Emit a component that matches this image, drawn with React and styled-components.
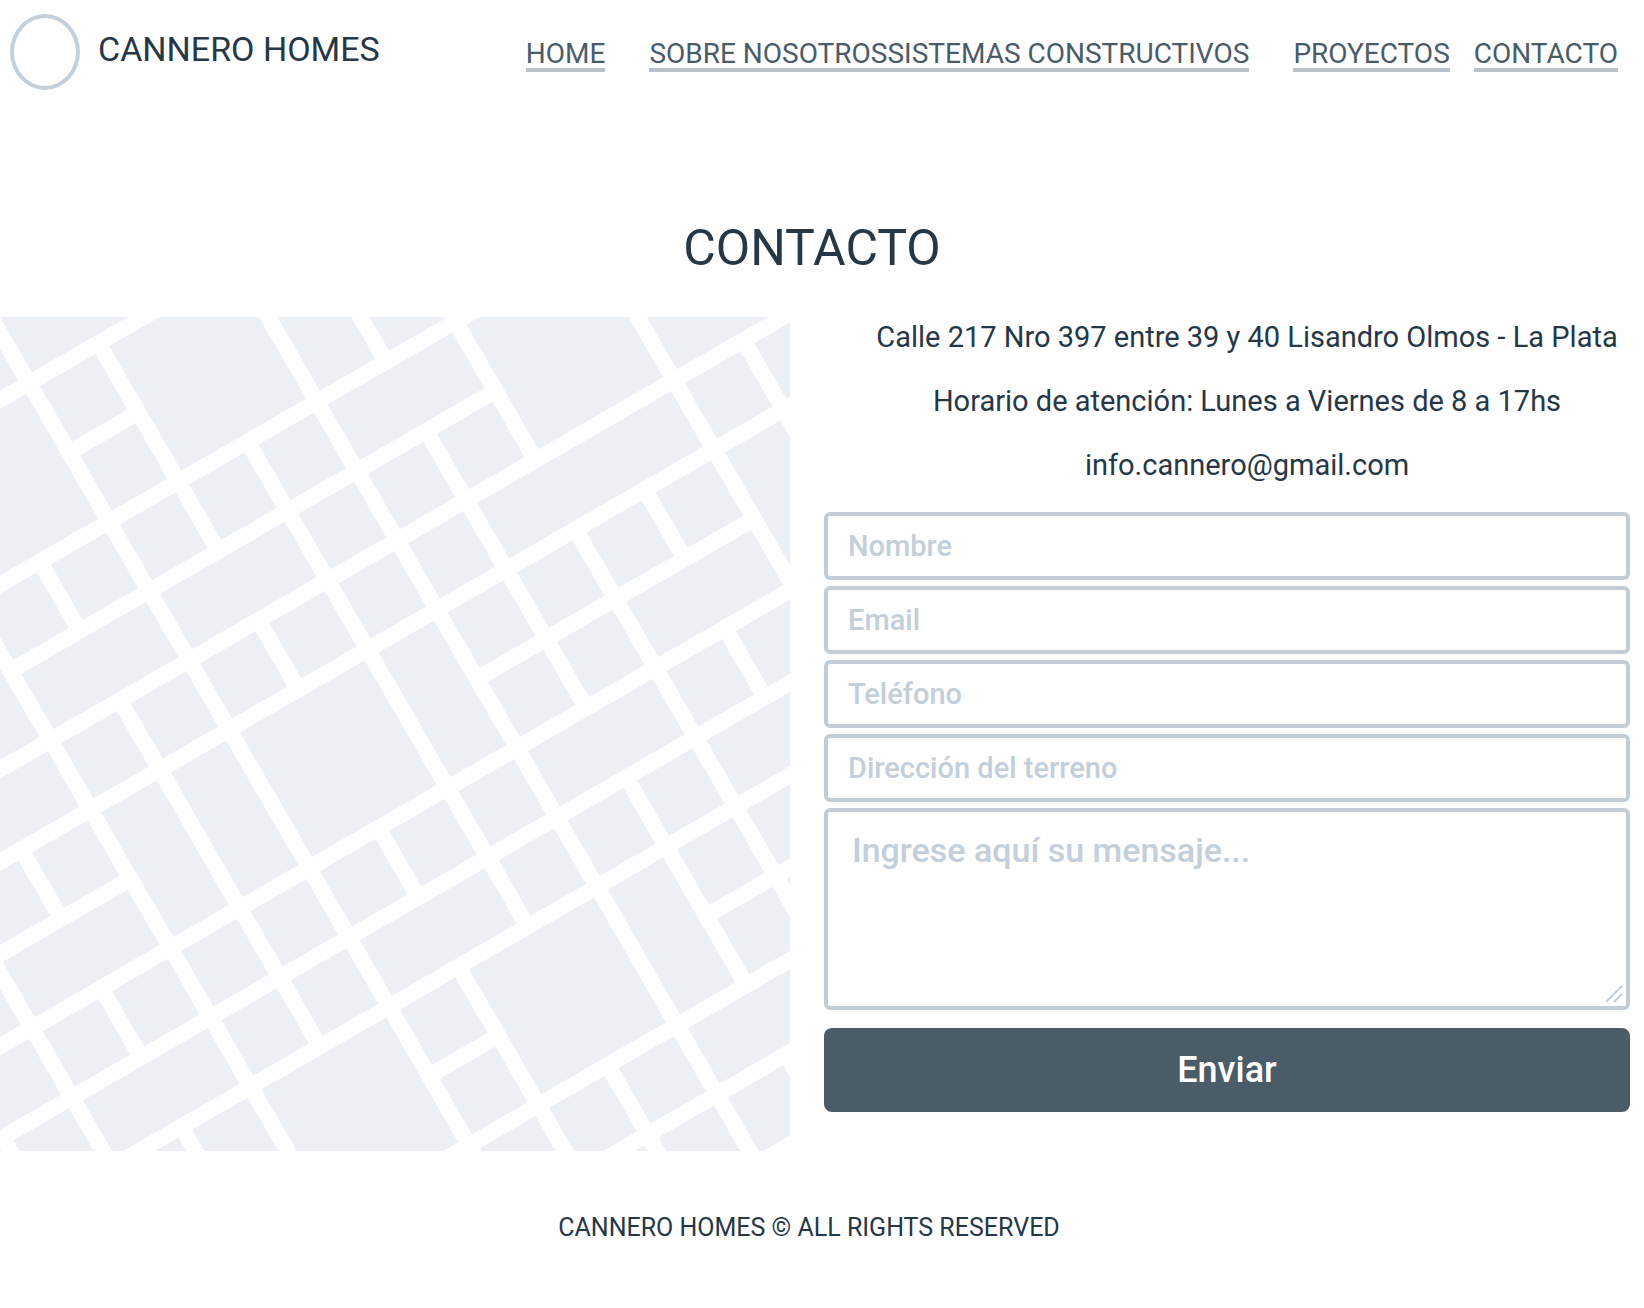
import React from "react";
import styled, { createGlobalStyle } from "styled-components";

const colors = {
  page: "#fefefe",
  ink: "#263746",
  slate: "#4b5c69",
  line: "#c3cdd7",
  hint: "#c3cfda",
  underline: "#bcc2ca",
  block: "#eceff4",
};

const GlobalStyle = createGlobalStyle`
  *, *::before, *::after { box-sizing: border-box; }
  body {
    margin: 0;
    background: ${colors.page};
    color: ${colors.ink};
    font-family: Roboto, sans-serif;
  }
`;

const Header = styled.header`
  display: flex;
  align-items: center;
  justify-content: space-between;
  min-height: 104px;
  padding: 0 26px 0 10px;
`;

const Brand = styled.a`
  display: flex;
  align-items: center;
  gap: 18px;
  color: ${colors.ink};
  text-decoration: none;
  white-space: nowrap;
`;

const BrandMark = styled.span`
  width: 70px;
  height: 76px;
  border: 4px solid ${colors.hint};
  border-radius: 50%;
`;

const BrandName = styled.span`
  padding-bottom: 6px;
  font-size: 34px;
  line-height: 40px;
`;

const Nav = styled.nav`
  display: flex;
  gap: 24px;
  padding-top: 8px;
`;

const NavGroup = styled.div`
  display: flex;
  margin-right: ${(p) => (p.$wide ? "20px" : "0")};
`;

const NavLink = styled.a`
  border-bottom: 4px solid ${colors.underline};
  color: ${colors.slate};
  font-size: 28px;
  line-height: 28px;
  text-decoration: none;
  white-space: nowrap;
`;

const Title = styled.h1`
  margin: 0;
  padding: 112px 20px 37px 0;
  font-size: 50px;
  font-weight: 400;
  line-height: 64px;
  text-align: center;
`;

const Columns = styled.main`
  display: grid;
  grid-template-columns: 790fr 854fr;
`;

const MapArea = styled.svg`
  display: block;
  width: 100%;
  height: auto;
  fill: ${colors.block};
`;

const Panel = styled.section`
  padding: 0 14px 0 34px;
`;

const Details = styled.address`
  display: grid;
  gap: 32px;
  padding: 4px 0 31px 40px;
  font-size: 29px;
  font-style: normal;
  line-height: 32px;
  text-align: center;
`;

const Form = styled.form`
  display: grid;
  gap: 6px;
`;

const Field = styled.input`
  width: 100%;
  height: 68px;
  padding: 0 20px;
  border: 4px solid ${colors.line};
  border-radius: 6px;
  background: transparent;
  color: ${colors.ink};
  font: 500 29px Roboto, sans-serif;

  &::placeholder {
    color: ${colors.hint};
    opacity: 1;
  }
`;

const MessageBox = styled.div`
  position: relative;
  margin-bottom: 12px;
`;

const Message = styled(Field)`
  display: block;
  height: 202px;
  padding: 18px 24px;
  font-size: 34px;
  line-height: 40px;
  resize: none;
`;

const Grip = styled.svg`
  position: absolute;
  right: 7px;
  bottom: 7px;
  fill: none;
  stroke: ${colors.hint};
  stroke-width: 2;
`;

const Submit = styled.button`
  height: 84px;
  border: 0;
  border-radius: 8px;
  background: ${colors.slate};
  color: #fff;
  font: 500 36px Roboto, sans-serif;
`;

const Footer = styled.footer`
  padding: 61px 26px 48px 0;
  font-size: 25px;
  line-height: 32px;
  text-align: center;
`;

// City blocks on an 80-unit street grid: [column, row, columns, rows]
const blocks = [
  [0, -1, 2, 1], [-2, -1, 2, 1], [4, 1, 1, 1], [3, 0, 1, 2], [1, 0, 2, 2],
  [-2, 0, 2, 2], [0, 0, 1, 1], [0, 1, 1, 1],
  [-4, 2, 2, 2], [-2, 2, 1, 1], [-1, 2, 1, 1], [0, 2, 1, 1], [1, 2, 1, 1],
  [2, 2, 1, 1], [3, 2, 2, 1], [5, 2, 2, 2],
  [-2, 3, 2, 1], [0, 3, 2, 1], [2, 3, 1, 1], [3, 3, 1, 1], [4, 3, 1, 1],
  [7, 3, 2, 1],
  [-4, 4, 2, 1], [-2, 4, 1, 1], [-1, 4, 1, 1], [0, 4, 1, 1], [1, 4, 1, 1],
  [2, 4, 1, 1], [3, 4, 1, 1], [4, 4, 3, 1], [7, 4, 1, 1], [8, 4, 1, 1],
  [-4, 5, 1, 1], [-3, 5, 1, 1], [-2, 5, 1, 2], [-1, 5, 1, 2], [0, 5, 2, 2],
  [2, 5, 1, 2], [3, 5, 1, 1], [4, 5, 1, 1], [5, 5, 1, 1], [6, 5, 1, 1],
  [7, 5, 1, 2],
  [-5, 6, 1, 1], [-4, 6, 2, 1], [3, 6, 1, 1], [4, 6, 1, 1], [5, 6, 2, 1],
  [-6, 7, 2, 1], [-4, 7, 1, 1], [-3, 7, 1, 1], [-2, 7, 1, 1], [-1, 7, 1, 1],
  [0, 7, 1, 1], [1, 7, 1, 1], [2, 7, 1, 1], [3, 7, 2, 1], [5, 7, 1, 1],
  [6, 7, 1, 1],
  [-6, 8, 1, 1], [-5, 8, 1, 1], [-4, 8, 2, 1], [-2, 8, 1, 1], [-1, 8, 1, 1],
  [0, 8, 2, 1], [2, 8, 1, 1], [3, 8, 1, 1], [4, 8, 1, 1], [5, 8, 2, 1],
  [-4, 9, 1, 1], [-3, 9, 1, 1], [-2, 9, 2, 2], [0, 9, 1, 1], [1, 9, 2, 2],
  [3, 9, 1, 2], [4, 9, 1, 1], [5, 9, 1, 1],
  [0, 10, 1, 1], [4, 10, 1, 1], [5, 10, 1, 1],
  [0, 11, 1, 1], [1, 11, 1, 1], [2, 11, 1, 1], [3, 11, 2, 1],
  [1, 12, 1, 1], [2, 12, 1, 1], [3, 12, 1, 1],
];

const fields = [
  { name: "nombre", type: "text", label: "Nombre" },
  { name: "email", type: "email", label: "Email" },
  { name: "telefono", type: "tel", label: "Teléfono" },
  { name: "direccion", type: "text", label: "Dirección del terreno" },
];

function StreetMap() {
  return (
    <MapArea viewBox="0 0 790 834" aria-hidden="true">
      <g transform="translate(40 69) rotate(-30)">
        {blocks.map(([col, row, w, h]) => (
          <rect
            key={`${col},${row}`}
            x={col * 80}
            y={row * 80}
            width={w * 80 - 16}
            height={h * 80 - 16}
          />
        ))}
      </g>
    </MapArea>
  );
}

export default function App() {
  return (
    <>
      <GlobalStyle />
      <Header>
        <Brand href="#home">
          <BrandMark />
          <BrandName>CANNERO HOMES</BrandName>
        </Brand>
        <Nav>
          <NavGroup $wide>
            <NavLink href="#home">HOME</NavLink>
          </NavGroup>
          <NavGroup $wide>
            <NavLink href="#nosotros">SOBRE NOSOTROS</NavLink>
            <NavLink href="#sistemas">SISTEMAS CONSTRUCTIVOS</NavLink>
          </NavGroup>
          <NavGroup>
            <NavLink href="#proyectos">PROYECTOS</NavLink>
          </NavGroup>
          <NavGroup>
            <NavLink href="#contacto">CONTACTO</NavLink>
          </NavGroup>
        </Nav>
      </Header>
      <Title>CONTACTO</Title>
      <Columns>
        <StreetMap />
        <Panel>
          <Details>
            <span>Calle 217 Nro 397 entre 39 y 40 Lisandro Olmos - La Plata</span>
            <span>Horario de atención: Lunes a Viernes de 8 a 17hs</span>
            <span>info.cannero@gmail.com</span>
          </Details>
          <Form onSubmit={(e) => e.preventDefault()}>
            {fields.map((f) => (
              <Field
                key={f.name}
                name={f.name}
                type={f.type}
                placeholder={f.label}
                aria-label={f.label}
              />
            ))}
            <MessageBox>
              <Message
                as="textarea"
                name="mensaje"
                placeholder="Ingrese aquí su mensaje..."
                aria-label="Ingrese aquí su mensaje..."
              />
              <Grip width="18" height="18" viewBox="0 0 18 18" aria-hidden="true">
                <path d="M1 17 17 1M9 17l8-8" />
              </Grip>
            </MessageBox>
            <Submit type="submit">Enviar</Submit>
          </Form>
        </Panel>
      </Columns>
      <Footer>CANNERO HOMES © ALL RIGHTS RESERVED</Footer>
    </>
  );
}
